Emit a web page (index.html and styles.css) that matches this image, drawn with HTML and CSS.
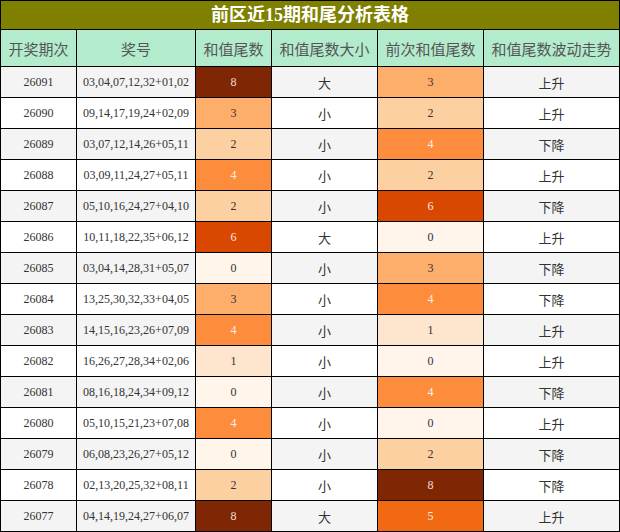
FILE: index.html
```html
<!DOCTYPE html>
<html lang="zh">
<head>
<meta charset="utf-8">
<title>前区近15期和尾分析表格</title>
<link rel="stylesheet" href="styles.css">
</head>
<body>
<table class="tbl">
  <colgroup>
    <col class="c1"><col class="c2"><col class="c3"><col class="c4"><col class="c5"><col class="c6">
  </colgroup>
  <thead>
    <tr class="title-row"><th colspan="6" class="title">前区近15期和尾分析表格</th></tr>
    <tr class="head-row">
      <th>开奖期次</th><th>奖号</th><th>和值尾数</th><th>和值尾数大小</th><th>前次和值尾数</th><th>和值尾数波动走势</th>
    </tr>
  </thead>
  <tbody>
    <tr><td class="num">26091</td><td class="num">03,04,07,12,32+01,02</td><td class="num v8">8</td><td class="cn">大</td><td class="num v3">3</td><td class="cn">上升</td></tr>
    <tr><td class="num">26090</td><td class="num">09,14,17,19,24+02,09</td><td class="num v3">3</td><td class="cn">小</td><td class="num v2">2</td><td class="cn">上升</td></tr>
    <tr><td class="num">26089</td><td class="num">03,07,12,14,26+05,11</td><td class="num v2">2</td><td class="cn">小</td><td class="num v4">4</td><td class="cn">下降</td></tr>
    <tr><td class="num">26088</td><td class="num">03,09,11,24,27+05,11</td><td class="num v4">4</td><td class="cn">小</td><td class="num v2">2</td><td class="cn">上升</td></tr>
    <tr><td class="num">26087</td><td class="num">05,10,16,24,27+04,10</td><td class="num v2">2</td><td class="cn">小</td><td class="num v6">6</td><td class="cn">下降</td></tr>
    <tr><td class="num">26086</td><td class="num">10,11,18,22,35+06,12</td><td class="num v6">6</td><td class="cn">大</td><td class="num v0">0</td><td class="cn">上升</td></tr>
    <tr><td class="num">26085</td><td class="num">03,04,14,28,31+05,07</td><td class="num v0">0</td><td class="cn">小</td><td class="num v3">3</td><td class="cn">下降</td></tr>
    <tr><td class="num">26084</td><td class="num">13,25,30,32,33+04,05</td><td class="num v3">3</td><td class="cn">小</td><td class="num v4">4</td><td class="cn">下降</td></tr>
    <tr><td class="num">26083</td><td class="num">14,15,16,23,26+07,09</td><td class="num v4">4</td><td class="cn">小</td><td class="num v1">1</td><td class="cn">上升</td></tr>
    <tr><td class="num">26082</td><td class="num">16,26,27,28,34+02,06</td><td class="num v1">1</td><td class="cn">小</td><td class="num v0">0</td><td class="cn">上升</td></tr>
    <tr><td class="num">26081</td><td class="num">08,16,18,24,34+09,12</td><td class="num v0">0</td><td class="cn">小</td><td class="num v4">4</td><td class="cn">下降</td></tr>
    <tr><td class="num">26080</td><td class="num">05,10,15,21,23+07,08</td><td class="num v4">4</td><td class="cn">小</td><td class="num v0">0</td><td class="cn">上升</td></tr>
    <tr><td class="num">26079</td><td class="num">06,08,23,26,27+05,12</td><td class="num v0">0</td><td class="cn">小</td><td class="num v2">2</td><td class="cn">下降</td></tr>
    <tr><td class="num">26078</td><td class="num">02,13,20,25,32+08,11</td><td class="num v2">2</td><td class="cn">小</td><td class="num v8">8</td><td class="cn">下降</td></tr>
    <tr><td class="num">26077</td><td class="num">04,14,19,24,27+06,07</td><td class="num v8">8</td><td class="cn">大</td><td class="num v5">5</td><td class="cn">上升</td></tr>
  </tbody>
</table>
</body>
</html>
```

FILE: styles.css
```css
html, body {
  margin: 0;
  padding: 0;
  background: #ffffff;
}

.tbl {
  width: 620px;
  border-collapse: collapse;
  table-layout: fixed;
  font-family: "Liberation Serif", "Noto Sans CJK SC", serif;
}

.c1 { width: 76px; }
.c2 { width: 119px; }
.c3 { width: 76px; }
.c4 { width: 106px; }
.c5 { width: 106px; }
.c6 { width: 136px; }

.tbl th,
.tbl td {
  border: 1px solid #000;
  padding: 0;
  text-align: center;
  vertical-align: middle;
}

.title {
  height: 28px;
  background: #808000;
  color: #ffffff;
  font-family: "Liberation Serif", "Noto Sans CJK SC", sans-serif;
  font-size: 18px;
  font-weight: bold;
  line-height: 28px;
}

.head-row th {
  height: 36px;
  background: #b3ebcd;
  color: #555555;
  font-family: "Noto Sans CJK SC", sans-serif;
  font-size: 15px;
  font-weight: normal;
}

.tbl tbody td {
  height: 30px;
  color: #333333;
}

.tbl tbody tr:nth-child(odd) { background: #f4f4f4; }
.tbl tbody tr:nth-child(even) { background: #ffffff; }

.num {
  font-family: "Liberation Serif", serif;
  font-size: 12px;
}

.cn {
  font-family: "Noto Sans CJK SC", sans-serif;
  font-size: 13px;
}

.tbl tbody td.v0 { background: #fff5eb; }
.tbl tbody td.v1 { background: #fee6ce; }
.tbl tbody td.v2 { background: #fdd0a2; }
.tbl tbody td.v3 { background: #fdae6b; }
.tbl tbody td.v4 { background: #fd8d3c; color: #fbeee6; }
.tbl tbody td.v5 { background: #f16913; color: #fbeee6; }
.tbl tbody td.v6 { background: #d94801; color: #fbeee6; }
.tbl tbody td.v8 { background: #7f2704; color: #f2dcd2; }
```
